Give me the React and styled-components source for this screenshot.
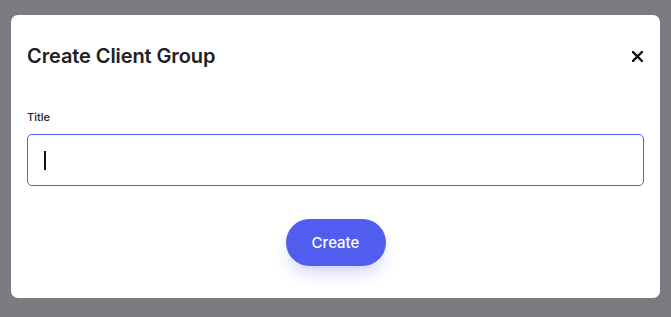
import React from 'react';
import styled, { createGlobalStyle } from 'styled-components';

const Global = createGlobalStyle`
  html, body { margin: 0; padding: 0; }
  body {
    background: #7b7c80;
    font-family: Inter, "Noto Sans", sans-serif;
    color: #222326;
  }
`;

const Backdrop = styled.div`
  width: 671px;
  height: 317px;
  box-sizing: border-box;
  padding: 15px 11px 0;
`;

const Modal = styled.div`
  width: 649px;
  height: 283px;
  box-sizing: border-box;
  background: #fff;
  border-radius: 7px;
  padding: 0 16px;
  display: flex;
  flex-direction: column;
`;

const Header = styled.div`
  display: flex;
  align-items: center;
  justify-content: space-between;
  height: 28px;
  margin-top: 27px;
`;

const Title = styled.h2`
  margin: 0;
  font-size: 20px;
  font-weight: 600;
  letter-spacing: -0.1px;
  line-height: 28px;
  color: #202124;
`;

const CloseButton = styled.button`
  border: 0;
  background: none;
  padding: 0;
  margin-right: 1px;
  width: 12px;
  height: 12px;
  display: flex;
  align-items: center;
  justify-content: center;
  cursor: pointer;
`;

const Field = styled.div`
  display: flex;
  flex-direction: column;
  margin-top: 40px;
`;

const Label = styled.label`
  font-size: 11px;
  font-weight: 500;
  line-height: 14px;
  color: #222326;
  margin-bottom: 10px;
`;

const InputWrap = styled.div`
  position: relative;
`;

const Input = styled.input`
  width: 100%;
  height: 52px;
  box-sizing: border-box;
  border: 1px solid #4f5cf0;
  border-radius: 5px;
  padding: 0 16px;
  font-family: inherit;
  font-size: 16px;
  outline: none;
  caret-color: transparent;
`;

const Caret = styled.span`
  position: absolute;
  left: 17px;
  top: 17px;
  width: 1.5px;
  height: 19px;
  background: #111;
`;

const Actions = styled.div`
  display: flex;
  justify-content: center;
  margin-top: 33px;
`;

const PrimaryButton = styled.button`
  width: 100px;
  height: 47px;
  border: 0;
  border-radius: 24px;
  background: #505def;
  color: #fff;
  font-family: inherit;
  font-size: 15px;
  font-weight: 500;
  box-shadow: 0 10px 16px -4px rgba(80, 93, 239, 0.28);
  cursor: pointer;
`;

function CloseIcon() {
  return (
    <svg width="11" height="11" viewBox="0 0 11 11">
      <path d="M1 1 L10 10 M10 1 L1 10" stroke="#111" strokeWidth="2.4" strokeLinecap="square" />
    </svg>
  );
}

export default function App() {
  return (
    <>
      <Global />
      <Backdrop>
        <Modal>
          <Header>
            <Title>Create Client Group</Title>
            <CloseButton aria-label="Close">
              <CloseIcon />
            </CloseButton>
          </Header>
          <Field>
            <Label htmlFor="title">Title</Label>
            <InputWrap>
              <Input id="title" type="text" />
              <Caret />
            </InputWrap>
          </Field>
          <Actions>
            <PrimaryButton>Create</PrimaryButton>
          </Actions>
        </Modal>
      </Backdrop>
    </>
  );
}
